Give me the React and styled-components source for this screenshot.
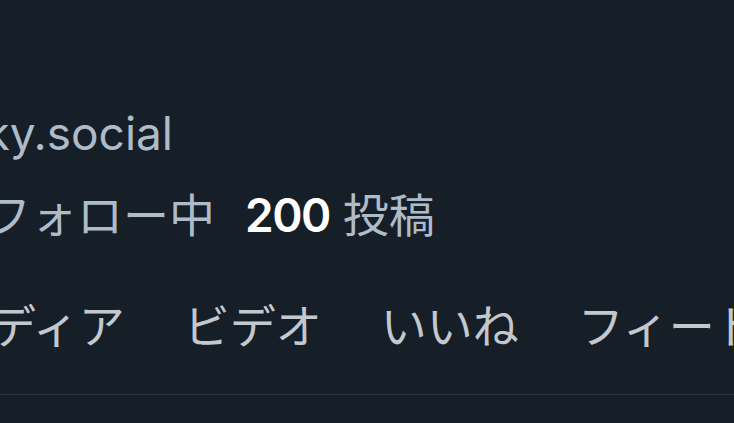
import React from "react";
import styled, { createGlobalStyle } from "styled-components";

const Global = createGlobalStyle`
  html, body {
    margin: 0;
    padding: 0;
    background: #161e27;
  }
  body {
    width: 734px;
    height: 423px;
    overflow: hidden;
    font-family: Inter, "Noto Sans CJK JP", sans-serif;
  }
`;

const Page = styled.div`
  width: 734px;
  height: 423px;
  overflow: hidden;
  background: #161e27;
  padding-top: 105px;
  box-sizing: border-box;
  display: flex;
  flex-direction: column;
`;

const EndAligned = styled.div`
  width: ${(p) => p.$width}px;
  flex: none;
  display: flex;
  justify-content: flex-end;
  white-space: nowrap;
`;

const Handle = styled.div`
  font-family: Inter, "Noto Sans CJK JP", sans-serif;
  font-size: 46px;
  line-height: 56px;
  color: #aebbc9;
  white-space: nowrap;
`;

const StatsRow = styled.div`
  margin-top: ${(p) => (p.$nested ? 0 : 23)}px;
  display: flex;
  align-items: baseline;
  gap: 30px;
  white-space: nowrap;
`;

const Stat = styled.span`
  display: inline-flex;
  align-items: baseline;
  gap: 13px;
  line-height: 56px;
`;

const Num = styled.span`
  font-family: Inter, sans-serif;
  font-weight: 600;
  font-size: 46px;
  letter-spacing: -1.5px;
  color: #ffffff;
`;

const Label = styled.span`
  font-family: "Noto Sans CJK JP", sans-serif;
  font-size: 46px;
  color: #aebbc9;
`;

const TabBar = styled.div`
  margin-top: 53px;
  margin-left: -358px;
  display: flex;
  gap: 59px;
  border-bottom: 1px solid #2e3541;
  width: calc(100% + 358px);
`;

const Tab = styled.div`
  font-family: "Noto Sans CJK JP", sans-serif;
  font-size: 46px;
  line-height: 54px;
  padding-bottom: 44px;
  color: #c3c8cf;
  white-space: nowrap;
  flex: none;
`;

const tabs = ["投稿", "返信", "メディア", "ビデオ", "いいね", "フィード", "スターターパック"];

export default function App() {
  return (
    <>
      <Global />
      <Page>
        <EndAligned $width={173}>
          <Handle>@alice.bsky.social</Handle>
        </EndAligned>
        <StatsRow>
          <EndAligned $width={215}>
            <StatsRow $nested>
              <Stat>
                <Num>1,024</Num>
                <Label>フォロワー</Label>
              </Stat>
              <Stat>
                <Num>312</Num>
                <Label>フォロー中</Label>
              </Stat>
            </StatsRow>
          </EndAligned>
          <Stat>
            <Num>200</Num>
            <Label>投稿</Label>
          </Stat>
        </StatsRow>
        <TabBar>
          {tabs.map((t) => (
            <Tab key={t}>{t}</Tab>
          ))}
        </TabBar>
      </Page>
    </>
  );
}
